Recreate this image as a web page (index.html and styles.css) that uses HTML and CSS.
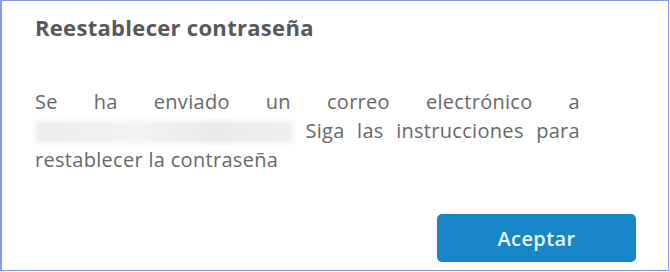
FILE: index.html
```html
<!DOCTYPE html>
<html lang="es">

    <head>
        <meta charset="UTF-8">
        <meta name="viewport" content="width=device-width, initial-scale=1.0">
        <title>Reestablecer contraseña</title>
        <link rel="stylesheet" href="styles.css">
    </head>

    <body>
        <div class="dialog">
            <h2 class="title">Reestablecer contraseña</h2>
            <p class="message">
                Se ha enviado un correo electrónico a
                <span class="hidden-mail"></span>
                Siga las instrucciones para restablecer la contraseña
            </p>
            <div class="actions">
                <button class="btn">Aceptar</button>
            </div>
        </div>
    </body>

</html>
```

FILE: styles.css
```css
* {
    margin: 0;
    padding: 0;
    box-sizing: border-box;
}

body {
    background: #fff;
    font-family: "Open Sans", "Noto Sans", sans-serif;
}

.dialog {
    width: 669px;
    height: 271px;
    border: 1px solid #859af6;
    border-left-width: 2px;
    padding: 11px 32px 0 33px;
    display: flex;
    flex-direction: column;
}

.title {
    font-size: 22px;
    font-weight: 700;
    letter-spacing: 0.3px;
    color: #585858;
    line-height: 30px;
}

.message {
    margin-top: 45px;
    width: 545px;
    font-size: 20px;
    letter-spacing: 0.3px;
    line-height: 29px;
    color: #686868;
    text-align: justify;
}

.hidden-mail {
    display: inline-block;
    width: 258px;
    height: 22px;
    vertical-align: -5px;
    background: linear-gradient(90deg, #ececec, #f2f2f2 40%, #e9e9e9 70%, #efefef);
    filter: blur(2px);
}

.actions {
    margin-top: auto;
    margin-bottom: 8px;
    display: flex;
    justify-content: flex-end;
}

.btn {
    width: 199px;
    height: 48px;
    border: none;
    border-radius: 5px;
    background: #1786c8;
    color: #eaf4fb;
    font-family: inherit;
    font-size: 20px;
    font-weight: 600;
    letter-spacing: 0.4px;
}
```
